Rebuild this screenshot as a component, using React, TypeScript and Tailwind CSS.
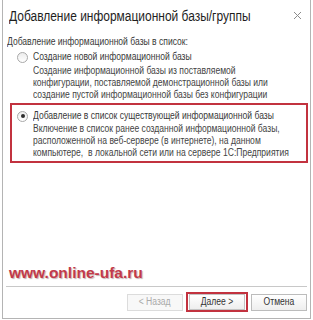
import React from "react";

function Radio({ checked }: { checked?: boolean }) {
  return (
    <span className="flex h-[11px] w-[11px] shrink-0 items-center justify-center rounded-full border border-[#a9a9a9] bg-gradient-to-b from-[#ececec] to-white">
      {checked ? <span className="h-[4px] w-[4px] rounded-full bg-[#2e2e2e]" /> : null}
    </span>
  );
}

function T({ children, className = "" }: { children: React.ReactNode; className?: string }) {
  return (
    <div className={"origin-left scale-x-[0.855] whitespace-nowrap " + className}>{children}</div>
  );
}

export default function App() {
  const font = { fontFamily: '"Liberation Sans", Arial, sans-serif' };
  return (
    <div className="h-[320px] w-[313px] overflow-hidden bg-white" style={font}>
      <div className="ml-[2px] flex h-[319px] w-[309px] flex-col border-x border-b border-[#b4b4b4]">
        <div className="flex h-[30px] items-center justify-between pl-[6px] pr-[8px] pt-[1px]">
          <T className="text-[14px] leading-none text-[#1e1e1e]">Добавление информационной базы/группы</T>
          <svg width="9" height="9" viewBox="0 0 9 9">
            <path d="M1 1 L8 8 M8 1 L1 8" stroke="#8c8c8c" strokeWidth="1" />
          </svg>
        </div>
        <T className="ml-[4px] mt-[6px] text-[10px] leading-[12px] text-[#3a3a3a]">
          Добавление информационной базы в список:
        </T>
        <div className="ml-[14px] mt-[3px] flex items-center gap-[5px] text-[10px] leading-[12px] text-[#3a3a3a]">
          <Radio />
          <T>Создание новой информационной базы</T>
        </div>
        <T className="ml-[30px] mt-[2px] text-[10px] leading-[12px] text-[#444]">
          Создание информационной базы из поставляемой
          <br />
          конфигурации, поставляемой демонстрационной базы или
          <br />
          создание пустой информационной базы без конфигурации
        </T>
        <div className="ml-[7px] mt-[2px] h-[60px] w-[298px] border-2 border-[#c2323f] pt-[5px]">
          <div className="ml-[5px] flex items-center gap-[5px] text-[10px] leading-[12px] text-[#3a3a3a]">
            <Radio checked />
            <T>Добавление в список существующей информационной базы</T>
          </div>
          <T className="ml-[21px] mt-[1px] text-[10px] leading-[12px] text-[#444]">
            Включение в список ранее созданной информационной базы,
            <br />
            расположенной на веб-сервере (в интернете), на данном
            <br />
            компьютере,&nbsp; в локальной сети или на сервере 1С:Предприятия
          </T>
        </div>
        <div
          className="ml-[6px] mt-[101px] text-[15.5px] font-bold leading-[18px] text-[#c23a4a]"
          style={{ textShadow: "1px 1px 1px rgba(60,0,0,0.3)" }}
        >
          www.online-ufa.ru
        </div>
        <div className="mx-[3px] mt-[4px] h-px bg-[#c8c8c8]" />
        <div className="mt-[5px] flex items-center justify-end pr-[3px] text-[10px] leading-none">
          <div className="flex h-[17px] w-[56px] items-center justify-center border border-[#dcdcdc] bg-[#f8f8f8] text-[#aaa]">
            <T className="!origin-center">&lt; Назад</T>
          </div>
          <div className="ml-[3px] flex h-[20px] w-[62px] items-center justify-center border-2 border-[#c2323f] bg-white">
            <div className="flex h-[16px] w-[56px] items-center justify-center border border-[#c4c4c4] bg-gradient-to-b from-white to-[#eeeeee] text-[#333]">
              <T className="!origin-center">Далее &gt;</T>
            </div>
          </div>
          <div className="ml-[3px] flex h-[17px] w-[56px] items-center justify-center border border-[#bcbcbc] bg-gradient-to-b from-white to-[#eeeeee] text-[#333]">
            <T className="!origin-center">Отмена</T>
          </div>
        </div>
      </div>
    </div>
  );
}
